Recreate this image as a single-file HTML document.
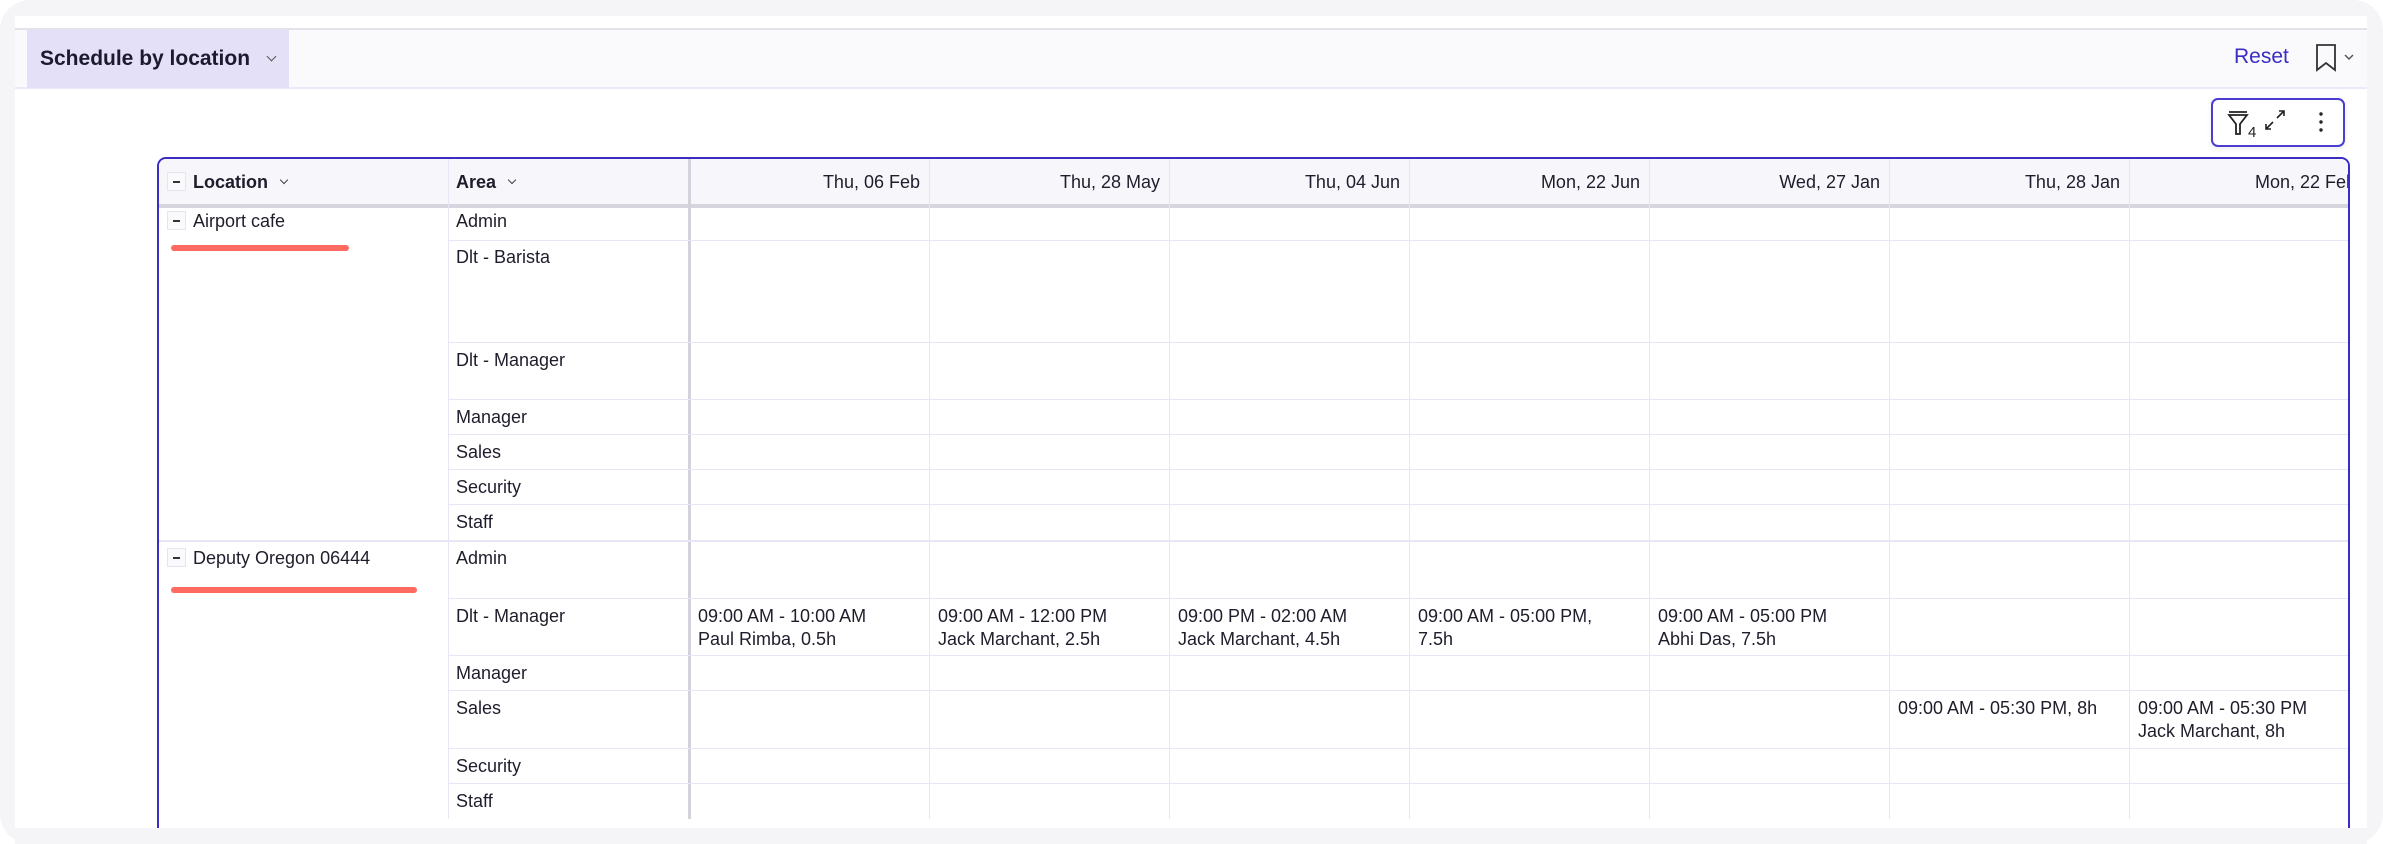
<!DOCTYPE html>
<html><head><meta charset="utf-8"><style>
*{margin:0;padding:0;box-sizing:border-box}
body{width:2383px;height:844px;background:#fff;font-family:"Liberation Sans",sans-serif;color:#1f1d2b;overflow:hidden;position:relative}
.abs{position:absolute}
#outer{left:0;top:0;width:2383px;height:844px;background:#f5f5f8;border-radius:30px}
#panel{left:15px;top:16px;width:2352px;height:812px;background:#fff}
#hdr{left:15px;top:28px;width:2352px;height:61px;background:#fafafc;border-top:2px solid #e3e2ea;border-bottom:2px solid #ebe9f7}
#btn{left:27px;top:30px;width:262px;height:58px;background:#e4e0f8;font-size:21px;font-weight:bold;padding:17px 0 0 13px;color:#1c1a2e}
.chev{display:inline-block;width:7px;height:7px;border-right:1.5px solid #444;border-bottom:1.5px solid #444;transform:rotate(45deg);vertical-align:middle}
#reset{left:2234px;top:45px;font-size:21px;color:#3b2cc4}
#tools{left:2211px;top:98px;width:134px;height:49px;border:2px solid #4a3dd0;border-radius:7px;background:#fff;box-shadow:0 2px 6px rgba(0,0,0,.08)}
#tbl{left:157px;top:157px;width:2193px;height:671px;border:2px solid #3b2cc4;border-bottom:none;border-radius:9px 9px 0 0;overflow:hidden;background:#fff}
.t{position:absolute;font-size:18px;line-height:23px;white-space:nowrap}
.vl{position:absolute;width:1px;background:#e8e6f5}
.hl{position:absolute;height:1px;background:#e8e6f5}
.mb{position:absolute;width:19px;height:19px;border:1.5px solid #e6e5ef;background:#fafafd}
.mb:after{content:"";position:absolute;left:5px;top:8px;width:7px;height:1.5px;background:#333}
.red{position:absolute;height:6px;background:#ff6b61;border-radius:3px}
</style></head><body>
<div id="outer" class="abs"></div>
<div id="panel" class="abs"></div>
<div id="hdr" class="abs"></div>
<div id="btn" class="abs">Schedule by location <span class="chev" style="margin:-6px 0 0 12px;border-color:#555"></span></div>
<div id="reset" class="abs">Reset</div>
<svg class="abs" style="left:2312px;top:42px" width="50" height="32" viewBox="0 0 50 32"><path d="M5 3h18v25l-9-7-9 7z" fill="none" stroke="#333" stroke-width="1.8"/><path d="M33 13l4 4 4-4" fill="none" stroke="#555" stroke-width="1.5"/></svg>
<div id="tools" class="abs">
<svg class="abs" style="left:12px;top:8px" width="110" height="32" viewBox="0 0 110 32"><path d="M4 4h18M4 7h18l-7 9v10h-4V16z" fill="none" stroke="#222" stroke-width="1.8"/><text x="23" y="29" font-size="15" font-family="Liberation Sans" fill="#222">4</text><path d="M52 10l7-7M54 3h5v5M48 14l-7 7M41 16v5h5" fill="none" stroke="#222" stroke-width="1.6"/><circle cx="96" cy="6" r="1.7" fill="#222"/><circle cx="96" cy="14" r="1.7" fill="#222"/><circle cx="96" cy="22" r="1.7" fill="#222"/></svg>
</div>
<div id="tbl" class="abs">
<div class="abs" style="left:0;top:0;width:2200px;height:45px;background:#f7f6fb"></div>
<div class="abs" style="left:0;top:45px;width:2200px;height:4px;background:#d6d5dd"></div>
<div class="vl" style="left:289px;top:0;height:700px"></div>
<div class="abs" style="left:529px;top:0;width:3px;height:700px;background:#d3d2da"></div>
<div class="vl" style="left:770px;top:0;height:700px"></div>
<div class="vl" style="left:1010px;top:0;height:700px"></div>
<div class="vl" style="left:1250px;top:0;height:700px"></div>
<div class="vl" style="left:1490px;top:0;height:700px"></div>
<div class="vl" style="left:1730px;top:0;height:700px"></div>
<div class="vl" style="left:1970px;top:0;height:700px"></div>
<div class="mb" style="left:8px;top:13px"></div>
<div class="t" style="left:34px;top:12px;font-weight:bold">Location <span class="chev" style="margin:-6px 0 0 8px;width:6px;height:6px"></span></div>
<div class="t" style="left:297px;top:12px;font-weight:bold">Area <span class="chev" style="margin:-6px 0 0 8px;width:6px;height:6px"></span></div>
<div class="t" style="left:530px;width:231px;text-align:right;top:12px">Thu, 06 Feb</div>
<div class="t" style="left:770px;width:231px;text-align:right;top:12px">Thu, 28 May</div>
<div class="t" style="left:1010px;width:231px;text-align:right;top:12px">Thu, 04 Jun</div>
<div class="t" style="left:1250px;width:231px;text-align:right;top:12px">Mon, 22 Jun</div>
<div class="t" style="left:1490px;width:231px;text-align:right;top:12px">Wed, 27 Jan</div>
<div class="t" style="left:1730px;width:231px;text-align:right;top:12px">Thu, 28 Jan</div>
<div class="t" style="top:12px;left:2096px">Mon, 22 Feb</div>
<div class="hl" style="left:289px;width:1920px;top:81px"></div>
<div class="hl" style="left:289px;width:1920px;top:183px"></div>
<div class="hl" style="left:289px;width:1920px;top:240px"></div>
<div class="hl" style="left:289px;width:1920px;top:275px"></div>
<div class="hl" style="left:289px;width:1920px;top:310px"></div>
<div class="hl" style="left:289px;width:1920px;top:345px"></div>
<div class="hl" style="left:0;width:2200px;top:381px;height:2px"></div>
<div class="hl" style="left:289px;width:1920px;top:439px"></div>
<div class="hl" style="left:289px;width:1920px;top:496px"></div>
<div class="hl" style="left:289px;width:1920px;top:531px"></div>
<div class="hl" style="left:289px;width:1920px;top:589px"></div>
<div class="hl" style="left:289px;width:1920px;top:624px"></div>
<div class="abs" style="left:289px;width:1920px;top:660px;height:60px;background:#fff"></div>
<div class="mb" style="left:8px;top:52px"></div>
<div class="t" style="left:34px;top:51px">Airport cafe</div>
<div class="red" style="left:12px;top:86px;width:178px"></div>
<div class="t" style="left:297px;top:51px">Admin</div>
<div class="t" style="left:297px;top:87px">Dlt - Barista</div>
<div class="t" style="left:297px;top:190px">Dlt - Manager</div>
<div class="t" style="left:297px;top:247px">Manager</div>
<div class="t" style="left:297px;top:282px">Sales</div>
<div class="t" style="left:297px;top:317px">Security</div>
<div class="t" style="left:297px;top:352px">Staff</div>
<div class="mb" style="left:8px;top:389px"></div>
<div class="t" style="left:34px;top:388px">Deputy Oregon 06444</div>
<div class="red" style="left:12px;top:428px;width:246px"></div>
<div class="t" style="left:297px;top:388px">Admin</div>
<div class="t" style="left:297px;top:446px">Dlt - Manager</div>
<div class="t" style="left:297px;top:503px">Manager</div>
<div class="t" style="left:297px;top:538px">Sales</div>
<div class="t" style="left:297px;top:596px">Security</div>
<div class="t" style="left:297px;top:631px">Staff</div>
<div class="t" style="left:539px;top:446px">09:00 AM - 10:00 AM<br>Paul Rimba, 0.5h</div>
<div class="t" style="left:779px;top:446px">09:00 AM - 12:00 PM<br>Jack Marchant, 2.5h</div>
<div class="t" style="left:1019px;top:446px">09:00 PM - 02:00 AM<br>Jack Marchant, 4.5h</div>
<div class="t" style="left:1259px;top:446px">09:00 AM - 05:00 PM,<br>7.5h</div>
<div class="t" style="left:1499px;top:446px">09:00 AM - 05:00 PM<br>Abhi Das, 7.5h</div>
<div class="t" style="left:1739px;top:538px">09:00 AM - 05:30 PM, 8h</div>
<div class="t" style="left:1979px;top:538px">09:00 AM - 05:30 PM<br>Jack Marchant, 8h</div>
</div>
<div class="abs" style="left:15px;top:828px;width:2352px;height:16px;background:#f5f5f8"></div>
</body></html>
